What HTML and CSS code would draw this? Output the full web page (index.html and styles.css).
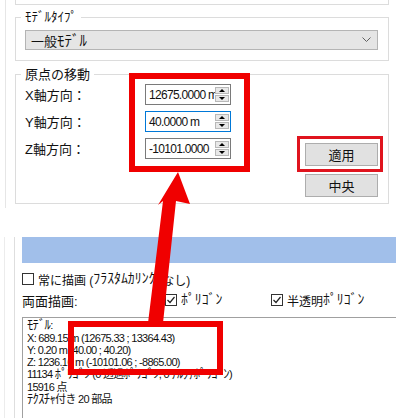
FILE: index.html
```html
<!DOCTYPE html>
<html lang="ja">
<head>
  <meta charset="UTF-8">
  <title>原点の移動</title>
  <link rel="stylesheet" href="styles.css">
</head>
<body>
  <div class="page">
    <div class="upper">
      <div class="group-tail"></div>

      <fieldset class="group model-type">
        <legend class="hw">ﾓﾃﾞﾙﾀｲﾌﾟ</legend>
        <div class="select">
          <span>一般<span class="hw">ﾓﾃﾞﾙ</span></span>
          <svg class="chevron" width="9" height="6" viewBox="0 0 9 6"><polyline points="0.5,0.5 4.5,4.5 8.5,0.5" fill="none" stroke="#606060" stroke-width="1"/></svg>
        </div>
      </fieldset>

      <fieldset class="group origin">
        <legend>原点の移動</legend>
        <div class="origin-body">
          <div class="coords">
            <span class="axis">X軸方向：</span>
            <div class="spin">
              <span class="spin-value">12675.0000 m</span>
              <span class="spin-btns"><span class="spin-up"></span><span class="spin-down"></span></span>
            </div>
            <span class="axis">Y軸方向：</span>
            <div class="spin focused">
              <span class="spin-value">40.0000 m</span>
              <span class="spin-btns"><span class="spin-up"></span><span class="spin-down"></span></span>
            </div>
            <span class="axis">Z軸方向：</span>
            <div class="spin">
              <span class="spin-value">-10101.0000</span>
              <span class="spin-btns"><span class="spin-up"></span><span class="spin-down"></span></span>
            </div>
          </div>
          <div class="actions">
            <button class="btn">適用</button>
            <button class="btn">中央</button>
          </div>
        </div>
      </fieldset>
    </div>

    <div class="lower">
      <div class="lower-inner">
        <div class="bar"></div>
        <div class="check-row">
          <span class="box"></span>常に描画 (<span class="hw">ﾌﾗｽﾀﾑｶﾘﾝｸﾞ</span>なし)
        </div>
        <div class="sides-row">
          <span class="sides-label">両面描画:</span>
          <span class="check poly"><span class="box"><svg width="10" height="10" viewBox="0 0 10 10"><polyline points="1.5,5 4,7.5 8.5,2" fill="none" stroke="#222" stroke-width="1.2"/></svg></span><span class="hw">ﾎﾟﾘｺﾞﾝ</span></span>
          <span class="check"><span class="box"><svg width="10" height="10" viewBox="0 0 10 10"><polyline points="1.5,5 4,7.5 8.5,2" fill="none" stroke="#222" stroke-width="1.2"/></svg></span>半透明<span class="hw">ﾎﾟﾘｺﾞﾝ</span></span>
        </div>
        <div class="info">
          <div><span class="hw">ﾓﾃﾞﾙ</span>:</div>
          <div>X: 689.15 m (12675.33 ; 13364.43)</div>
          <div>Y: 0.20 m (40.00 ; 40.20)</div>
          <div>Z: 1236.16 m (-10101.06 ; -8865.00)</div>
          <div>11134 <span class="hw">ﾎﾟﾘｺﾞﾝ</span> (0 透過<span class="hw">ﾎﾟﾘｺﾞﾝ</span>, 0 <span class="hw">ｱﾙﾌｧﾎﾟﾘｺﾞﾝ</span>)</div>
          <div>15916 点</div>
          <div><span class="hw">ﾃｸｽﾁｬ</span>付き 20 部品</div>
        </div>
      </div>
    </div>

    <!-- annotations -->
    <div class="mark mark-inputs"></div>
    <div class="mark mark-apply"></div>
    <div class="mark mark-info"></div>
    <svg class="arrow" width="396" height="418" viewBox="0 0 396 418">
      <polygon points="178,172 190,204 176,201 163,323 148,323 163,201 158,205" fill="#f00000"/>
    </svg>
  </div>
</body>
</html>
```

FILE: styles.css
```css
* {
  box-sizing: border-box;
}
body {
  margin: 0;
  background: #fff;
  color: #111;
  font-family: "Liberation Sans", "Noto Sans CJK JP", sans-serif;
  font-size: 13px;
}
.page {
  position: relative;
  width: 396px;
  height: 418px;
  overflow: hidden;
}
/* half-width kana render small in Noto, bump them up a bit */
.hw {
  font-size: 1.15em;
  line-height: 1;
}

/* upper dialog */
.upper {
  margin-left: 5px;
  width: 384px;
  height: 208px;
  border-left: 1px solid #e6e6e6;
  padding-left: 9px;
}
.group-tail {
  width: 374px;
  height: 5px;
  border: 1px solid #dcdcdc;
  border-top: none;
}
.group {
  width: 374px;
  margin: 0;
  border: 1px solid #dcdcdc;
  min-inline-size: 0;
}
.group legend {
  margin-left: -4px;
  padding: 0 4px;
  font-size: 12px;
  line-height: 14px;
}
.model-type legend.hw {
  font-size: 13px;
}
.model-type {
  margin-top: 5px;
  padding: 6px 10px 10px 9px;
}
.select {
  display: flex;
  align-items: center;
  height: 20px;
  padding: 0 5px;
  background: #e5e5e5;
  border: 1px solid #b4b4b4;
  font-size: 13px;
}
.select > span {
  flex: 1;
}
.chevron {
  margin-right: 1px;
}
.origin {
  margin-top: 6px;
  padding: 2px 10px 6px 9px;
}
.origin legend {
  font-size: 13px;
  line-height: 15px;
}
.origin-body {
  display: flex;
  justify-content: space-between;
}
.coords {
  display: grid;
  grid-template-columns: 120px 86px;
  grid-auto-rows: 21px;
  row-gap: 6px;
  align-items: center;
}
.spin {
  display: flex;
  align-items: center;
  height: 21px;
  border: 1px solid #7a7a7a;
  background: #fff;
}
.spin.focused {
  border-color: #0078d7;
}
.spin-value {
  flex: 1;
  overflow: hidden;
  white-space: nowrap;
  padding-left: 3px;
  font-size: 12px;
  letter-spacing: -0.7px;
}
.spin-btns {
  display: flex;
  flex-direction: column;
  gap: 1px;
  width: 14px;
  margin-right: 1px;
}
.spin-up, .spin-down {
  position: relative;
  height: 7px;
  background: #e8e8e8;
  border: 1px solid #b8b8b8;
}
.spin-up::after, .spin-down::after {
  content: "";
  position: absolute;
  left: 3px;
  top: 1px;
  border-left: 3px solid transparent;
  border-right: 3px solid transparent;
}
.spin-up::after {
  border-bottom: 3px solid #000;
}
.spin-down::after {
  border-top: 3px solid #000;
}
.actions {
  display: flex;
  flex-direction: column;
  gap: 8px;
  margin-top: 59px;
}
.btn {
  width: 73px;
  height: 23px;
  padding: 0;
  background: #e1e1e1;
  border: 1px solid #adadad;
  font-family: "Noto Sans CJK JP", sans-serif;
  font-size: 13px;
  color: #111;
}

/* lower panel */
.lower {
  margin-top: 29px;
  margin-left: 4px;
  height: 181px;
  border-left: 1px solid #ececec;
  padding-left: 9px;
}
.lower-inner {
  height: 100%;
  border-left: 1px solid #dedede;
  padding-left: 7px;
}
.bar {
  height: 26px;
  background: #a1bfea;
}
.check-row, .sides-row {
  display: flex;
  align-items: center;
  height: 14px;
  font-size: 12px;
  white-space: nowrap;
}
.check-row {
  margin-top: 9px;
}
.sides-row {
  margin-top: 7px;
}
.box {
  display: inline-flex;
  align-items: center;
  justify-content: center;
  width: 12px;
  height: 12px;
  margin-right: 4px;
  border: 1px solid #333;
  background: #fff;
}
.sides-label {
  width: 143px;
  font-size: 13px;
}
.check {
  display: inline-flex;
  align-items: center;
}
.check.poly {
  width: 106px;
}
.info {
  margin-top: 10px;
  height: 120px;
  border-top: 1px solid #a0a0a0;
  border-left: 1px solid #a0a0a0;
  padding: 1px 4px;
  font-size: 11px;
  line-height: 12.2px;
  letter-spacing: -0.7px;
  white-space: nowrap;
}

/* red annotations */
.mark {
  position: absolute;
  border: 6px solid #f00000;
}
.mark-inputs {
  left: 129px;
  top: 73px;
  width: 121px;
  height: 99px;
}
.mark-apply {
  left: 297px;
  top: 136px;
  width: 86px;
  height: 36px;
  border-width: 3px;
  border-color: #e0141e;
}
.mark-info {
  left: 68px;
  top: 321px;
  width: 155px;
  height: 54px;
}
.arrow {
  position: absolute;
  left: 0;
  top: 0;
}
```
